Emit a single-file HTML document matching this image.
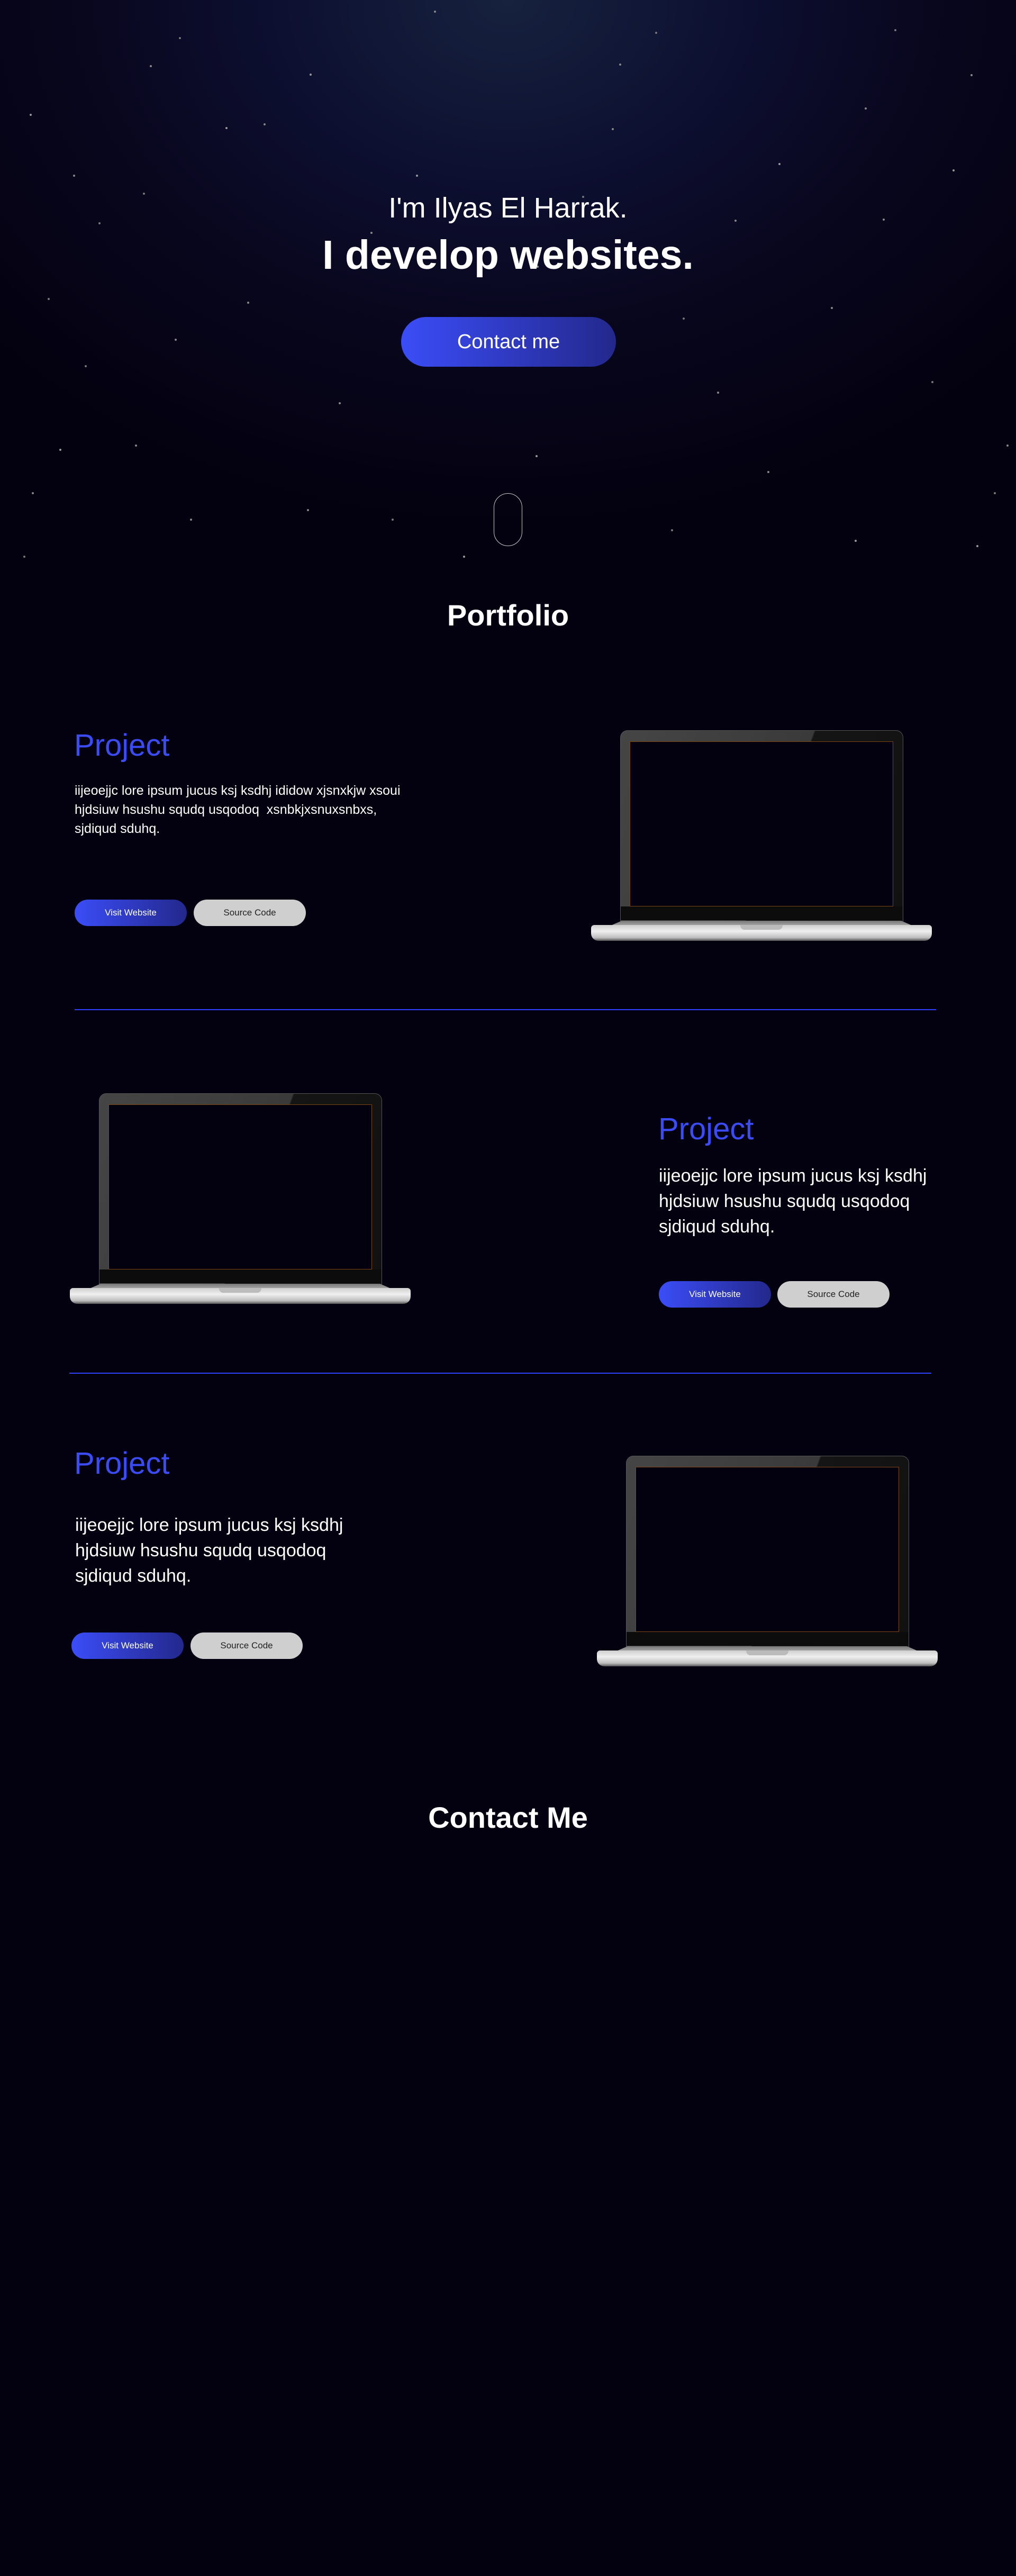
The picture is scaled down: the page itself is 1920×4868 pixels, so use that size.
<!DOCTYPE html>
<html><head><meta charset="utf-8"><style>
*{margin:0;padding:0;box-sizing:border-box}
html,body{width:1920px;height:4868px;background:#03010f;overflow:hidden;font-family:"Liberation Sans",sans-serif;color:#fff}
.hero{position:absolute;left:0;top:0;width:1920px;height:1060px;background:radial-gradient(ellipse 1300px 1000px at 50% 0%,#16223e 0%,#0d0f30 35%,#08061c 65%,#03010f 100%);overflow:hidden}
.stars{position:absolute;left:0;top:0;width:4px;height:4px;border-radius:50%;background:transparent;box-shadow:
56px 215px #999,138px 330px #888,283px 123px #888,270px 364px #777,426px 240px #999,498px 233px #888,585px 139px #999,467px 570px #888,90px 563px #777,112px 848px #999,44px 1050px #777,580px 962px #888,700px 438px #888,786px 330px #999,1014px 502px #999,1156px 242px #888,1012px 860px #999,1388px 415px #888,1471px 308px #999,1634px 203px #888,1800px 320px #999,1668px 413px #888,1834px 140px #888,1355px 740px #888,1352px 1085px #888,1615px 1020px #999,1845px 1030px #999,1878px 930px #777,1530px 1160px #888,1208px 1182px #999,1500px 1250px #777,960px 1150px #888,712px 1110px #999,359px 980px #888,220px 1160px #777,300px 1210px #888,510px 1195px #888,875px 1050px #999,1268px 1000px #777,830px 1410px #777,1600px 1290px #888,1750px 1350px #777,1170px 120px #888,1690px 55px #777,820px 20px #888,1238px 60px #777,338px 70px #777,186px 420px #777,330px 640px #888,1100px 370px #777,1570px 580px #888,1760px 720px #777,1902px 840px #888,640px 760px #888,160px 690px #777,1290px 600px #777,950px 640px #777,740px 980px #777,1450px 890px #888,60px 930px #888,255px 840px #888}
.l1{position:absolute;left:0;width:1920px;top:362px;text-align:center;font-size:54px;font-weight:300}
.l2{position:absolute;left:0;width:1920px;top:438px;text-align:center;font-size:77px;font-weight:700}
.cbtn{position:absolute;left:758px;top:599px;width:406px;height:94px;border-radius:47px;background:linear-gradient(90deg,#3b4df7,#23288c);font-size:38px;line-height:94px;text-align:center}
.mouse{position:absolute;left:933px;top:932px;width:54px;height:100px;border:1.5px solid #ccc;border-radius:27px}
.sect{position:absolute;left:0;width:1920px;text-align:center;font-size:56px;font-weight:700}
.ptitle{position:absolute;font-size:58px;color:#3b4cf5;font-weight:300}
.ptext{position:absolute;color:#fff}
.b1,.b2{position:absolute;width:212px;height:50px;border-radius:25px;font-size:17px;line-height:50px;text-align:center}
.b1{background:linear-gradient(90deg,#3b4df7,#23288c);color:#fff}
.b2{background:#cfcfcf;color:#222}
.hr{position:absolute;height:2px;background:#2f40ff}
.lap{position:absolute;width:644px;height:400px}
.lap .lid{position:absolute;left:55px;top:0;width:535px;height:362px;border-radius:14px 14px 0 0;background:linear-gradient(110deg,#454545 0%,#3a3a3a 55%,#151515 55.5%,#111 100%);border:1px solid #555}
.lap .scr{position:absolute;left:73px;top:21px;width:498px;height:312px;background:#03010f;border:1.5px solid #7a4510}
.lap .chin{position:absolute;left:56px;top:333px;width:533px;height:26px;background:#0c0c0c}
.lap .kb{position:absolute;left:35px;top:360px;width:574px;height:10px;background:linear-gradient(#777,#aaa);clip-path:polygon(4% 0,96% 0,100% 100%,0 100%)}
.lap .base{position:absolute;left:0;top:368px;width:644px;height:30px;border-radius:6px 6px 14px 14px;background:linear-gradient(#cfcfcf,#efefef 40%,#bdbdbd 80%,#555)}
.lap .notch{position:absolute;left:282px;top:368px;width:80px;height:9px;background:#bbb;border-radius:0 0 8px 8px}
</style></head><body>
<div class="hero"><div class="stars"></div>
<div class="l1">I'm Ilyas El Harrak.</div>
<div class="l2">I develop websites.</div>
<div class="cbtn">Contact me</div>
<div class="mouse"></div>
</div>

<div class="sect" style="top:1130px">Portfolio</div>

<div class="ptitle" style="left:140px;top:1375px">Project</div>
<div class="ptext" style="left:141px;top:1476px;width:625px;font-size:25px;line-height:36px">iijeoejjc lore ipsum jucus ksj ksdhj ididow xjsnxkjw xsoui hjdsiuw hsushu squdq usqodoq&nbsp; xsnbkjxsnuxsnbxs, sjdiqud sduhq.</div>
<div class="b1" style="left:141px;top:1700px">Visit Website</div>
<div class="b2" style="left:366px;top:1700px">Source Code</div>
<div class="lap" style="left:1117px;top:1380px"><div class="lid"></div><div class="scr"></div><div class="chin"></div><div class="kb"></div><div class="base"></div><div class="notch"></div></div>

<div class="hr" style="left:141px;top:1907px;width:1628px"></div>

<div class="lap" style="left:132px;top:2066px"><div class="lid"></div><div class="scr"></div><div class="chin"></div><div class="kb"></div><div class="base"></div><div class="notch"></div></div>
<div class="ptitle" style="left:1244px;top:2100px">Project</div>
<div class="ptext" style="left:1245px;top:2198px;width:560px;font-size:34px;line-height:48px">iijeoejjc lore ipsum jucus ksj ksdhj hjdsiuw hsushu squdq usqodoq sjdiqud sduhq.</div>
<div class="b1" style="left:1245px;top:2421px">Visit Website</div>
<div class="b2" style="left:1469px;top:2421px">Source Code</div>

<div class="hr" style="left:131px;top:2594px;width:1629px"></div>

<div class="ptitle" style="left:140px;top:2732px">Project</div>
<div class="ptext" style="left:142px;top:2858px;width:560px;font-size:34px;line-height:48px">iijeoejjc lore ipsum jucus ksj ksdhj hjdsiuw hsushu squdq usqodoq sjdiqud sduhq.</div>
<div class="b1" style="left:135px;top:3085px">Visit Website</div>
<div class="b2" style="left:360px;top:3085px">Source Code</div>
<div class="lap" style="left:1128px;top:2751px"><div class="lid"></div><div class="scr"></div><div class="chin"></div><div class="kb"></div><div class="base"></div><div class="notch"></div></div>

<div class="sect" style="top:3402px">Contact Me</div>
</body></html>
